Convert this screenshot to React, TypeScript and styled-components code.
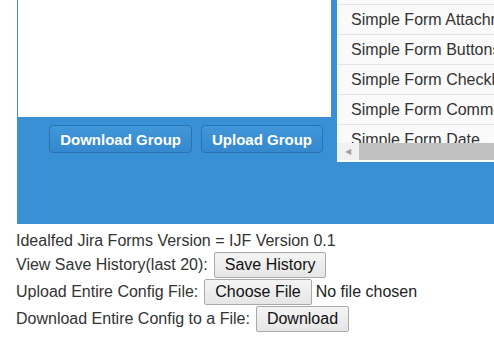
import styled, { createGlobalStyle } from "styled-components";

const GlobalStyle = createGlobalStyle`
  html, body {
    margin: 0;
    padding: 0;
    overflow: hidden;
    background: #ffffff;
    font-family: "Liberation Sans", Arial, sans-serif;
    color: #333333;
  }
`;

const Page = styled.div`
  width: 494px;
  overflow: hidden;
`;

const GroupPanel = styled.div`
  width: 540px;
  height: 224px;
  margin-left: 17px;
  background: #3a90d5;
  display: flex;
  gap: 6px;
  padding-left: 1px;
  box-sizing: border-box;
`;

const EditorColumn = styled.div`
  width: 313px;
  display: flex;
  flex-direction: column;
`;

const EditorArea = styled.div`
  height: 117px;
  background: #ffffff;
`;

const GroupActions = styled.div`
  display: flex;
  justify-content: flex-end;
  gap: 9px;
  padding: 8px 8px 0 0;
`;

const GroupButton = styled.button`
  height: 28px;
  padding: 0 10px;
  border: 1px solid #2b72b0;
  border-radius: 4px;
  background: linear-gradient(#4097da, #3588cd);
  color: #ffffff;
  font-family: "Liberation Sans", Arial, sans-serif;
  font-size: 15px;
  font-weight: bold;
  cursor: pointer;
`;

const FormList = styled.div`
  width: 200px;
  height: 162px;
  background: #ffffff;
  display: flex;
  flex-direction: column;
`;

const ListViewport = styled.div`
  height: 143px;
  overflow: hidden;
`;

const ListInner = styled.div`
  margin-top: -25px;
`;

const ListRow = styled.div`
  height: 29px;
  border-bottom: 1px solid #e4e4e4;
  background: #fafafa;
  display: flex;
  align-items: center;
  padding-left: 14px;
  font-size: 16px;
  color: #333333;
  white-space: nowrap;
`;

const HScroll = styled.div`
  height: 17px;
  background: #f1f1f1;
  display: flex;
  align-items: center;
`;

const ScrollArrow = styled.div`
  width: 22px;
  display: flex;
  justify-content: center;
  font-size: 8px;
  color: #a3a3a3;
`;

const ScrollThumb = styled.div`
  flex: 1;
  height: 17px;
  background: #c1c1c1;
`;

const Settings = styled.div`
  padding: 7px 0 0 16px;
  font-size: 16px;
  color: #333333;
`;

const SettingRow = styled.div<{ $tall?: boolean }>`
  height: ${(p) => (p.$tall ? "27px" : "20px")};
  display: flex;
  align-items: center;
  gap: 6px;
  white-space: nowrap;
`;

const PlainButton = styled.button`
  height: 26px;
  padding: 0 10px;
  border: 1px solid #a9a9a9;
  border-radius: 2px;
  background: linear-gradient(#f4f4f4, #e6e6e6);
  color: #111111;
  font-family: "Liberation Sans", Arial, sans-serif;
  font-size: 16px;
`;

const FileNote = styled.span`
  margin-left: -2px;
  color: #222222;
`;

const forms = [
  "Simple Form Approval",
  "Simple Form Attachment",
  "Simple Form Buttons",
  "Simple Form Checkbox",
  "Simple Form Comments",
  "Simple Form Date",
];

export default function App() {
  return (
    <>
      <GlobalStyle />
      <Page>
        <GroupPanel>
          <EditorColumn>
            <EditorArea />
            <GroupActions>
              <GroupButton>Download Group</GroupButton>
              <GroupButton>Upload Group</GroupButton>
            </GroupActions>
          </EditorColumn>
          <FormList>
            <ListViewport>
              <ListInner>
                {forms.map((f) => (
                  <ListRow key={f}>{f}</ListRow>
                ))}
              </ListInner>
            </ListViewport>
            <HScroll>
              <ScrollArrow>◀</ScrollArrow>
              <ScrollThumb />
            </HScroll>
          </FormList>
        </GroupPanel>
        <Settings>
          <SettingRow>Idealfed Jira Forms Version = IJF Version 0.1</SettingRow>
          <SettingRow $tall>
            View Save History(last 20): <PlainButton>Save History</PlainButton>
          </SettingRow>
          <SettingRow $tall>
            Upload Entire Config File: <PlainButton>Choose File</PlainButton>
            <FileNote>No file chosen</FileNote>
          </SettingRow>
          <SettingRow $tall>
            Download Entire Config to a File: <PlainButton>Download</PlainButton>
          </SettingRow>
        </Settings>
      </Page>
    </>
  );
}
